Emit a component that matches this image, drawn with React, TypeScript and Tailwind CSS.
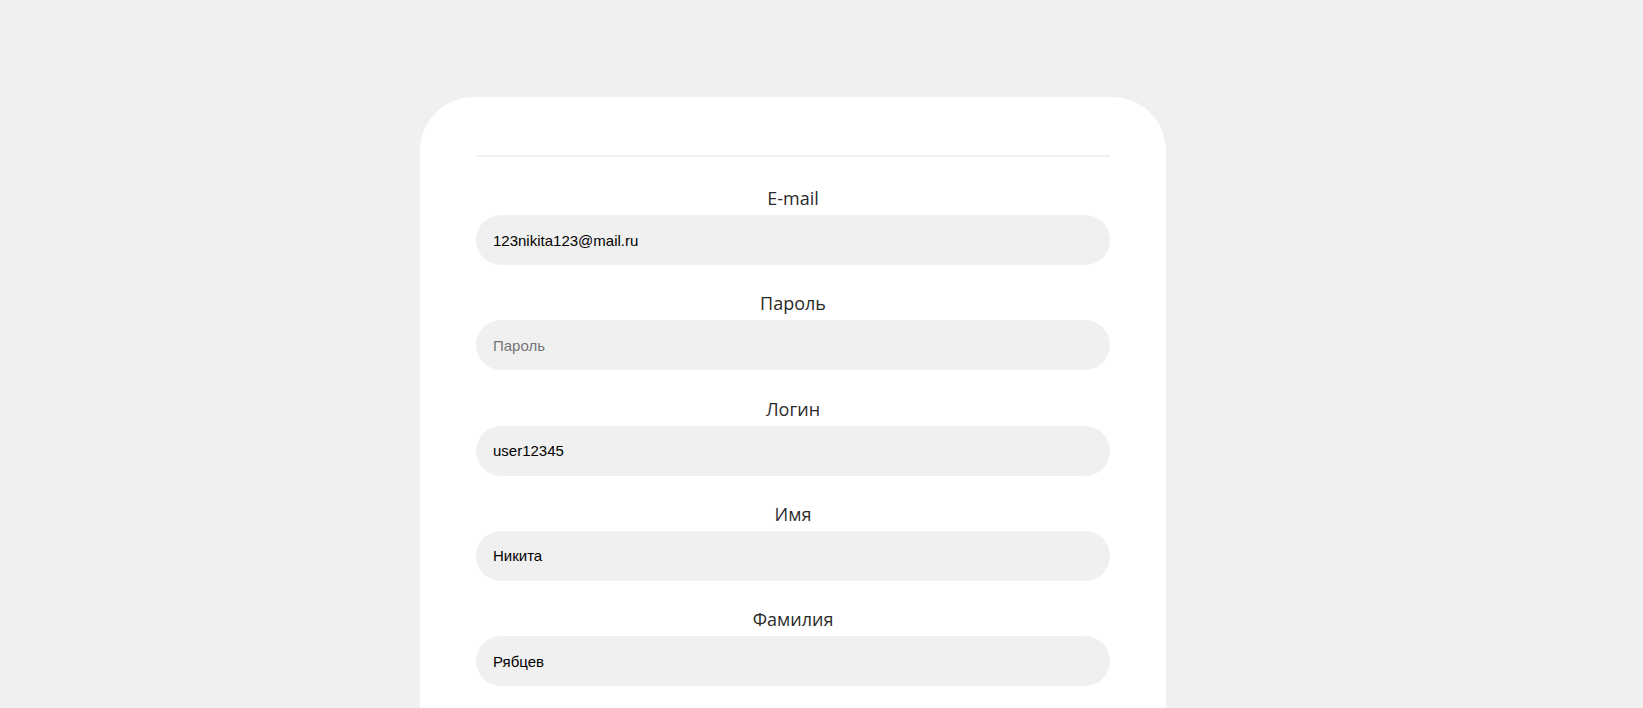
const fields = [
  { label: 'E-mail', value: '123nikita123@mail.ru', placeholder: 'E-mail', type: 'email' },
  { label: 'Пароль', value: '', placeholder: 'Пароль', type: 'password' },
  { label: 'Логин', value: 'user12345', placeholder: 'Логин', type: 'text' },
  { label: 'Имя', value: 'Никита', placeholder: 'Имя', type: 'text' },
  { label: 'Фамилия', value: 'Рябцев', placeholder: 'Фамилия', type: 'text' },
]

export default function App() {
  return (
    <main className="min-h-screen bg-[#f0f0f0] pt-[97px]">
      <div className="ml-[420px] w-[746px] rounded-t-[54px] bg-white px-[56px] pt-[58px] pb-10">
        <div className="h-[2px] bg-[#f0f0f0]" />
        <form className="pt-[29px]">
          {fields.map((field) => (
            <div key={field.label} className="mb-[26.3px]">
              <label className="mb-[5px] block text-center font-['Open_Sans',sans-serif] text-[18px] leading-[24px] font-medium text-[#2b2b2b]">
                {field.label}
              </label>
              <input
                type={field.type}
                defaultValue={field.value}
                placeholder={field.placeholder}
                className="block h-[50px] w-full rounded-full bg-[#f0f0f0] px-[17px] font-['Liberation_Sans',Arial,sans-serif] text-[15px] text-black outline-none placeholder:text-[#757575]"
              />
            </div>
          ))}
        </form>
      </div>
    </main>
  )
}
